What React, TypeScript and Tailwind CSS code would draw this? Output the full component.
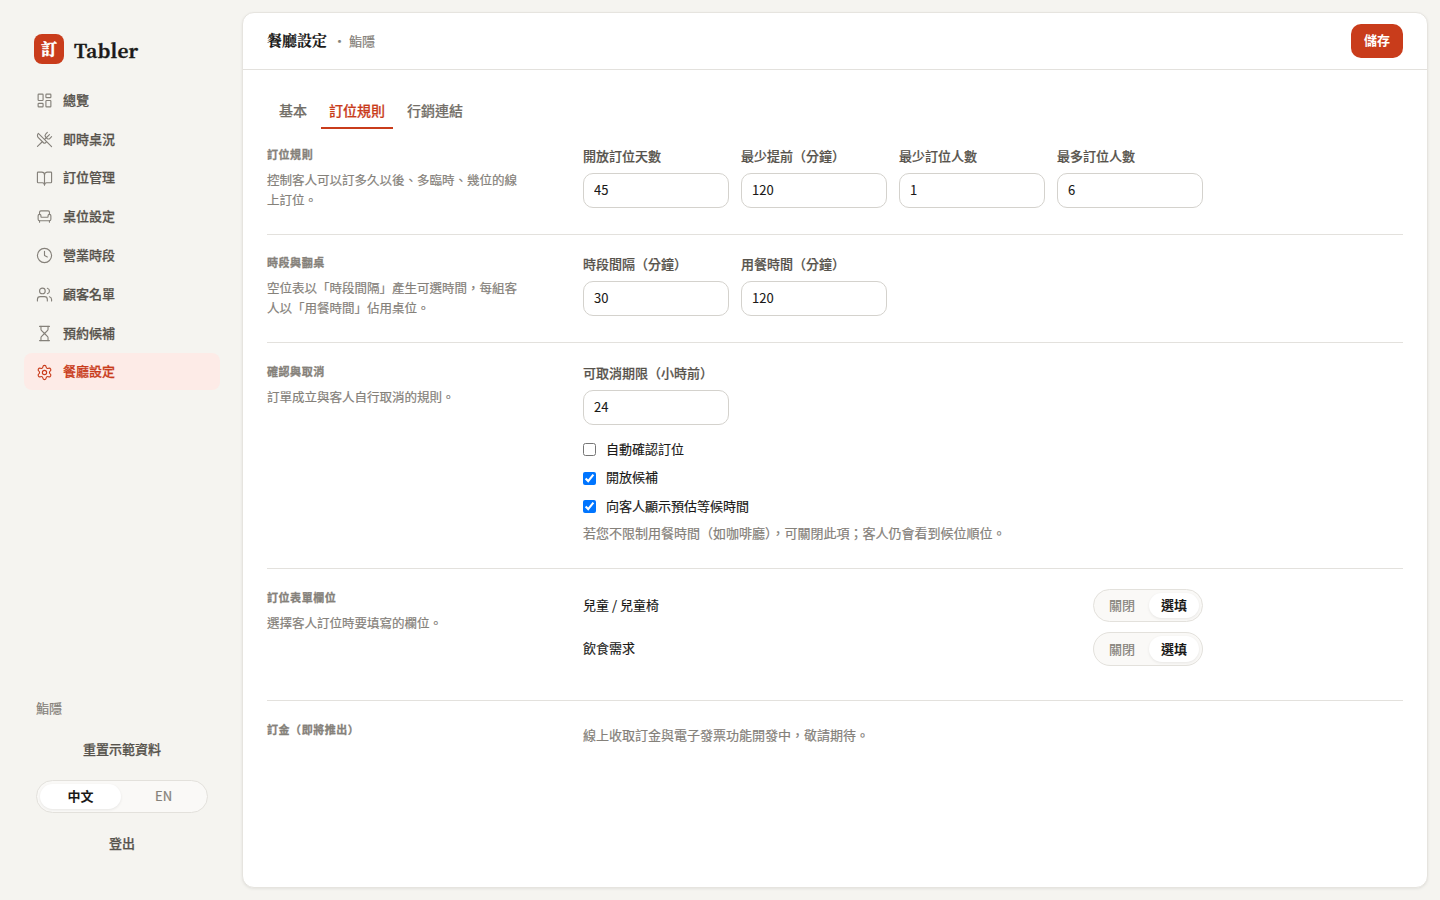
import { useState } from 'react';
import type { ReactNode } from 'react';
import {
  Armchair,
  BookOpen,
  Clock4,
  Hourglass,
  LayoutDashboard,
  Settings,
  Users,
  UtensilsCrossed,
} from 'lucide-react';
import clsx from 'clsx';

const NAV = [
  { label: '總覽', icon: LayoutDashboard },
  { label: '即時桌況', icon: UtensilsCrossed },
  { label: '訂位管理', icon: BookOpen },
  { label: '桌位設定', icon: Armchair },
  { label: '營業時段', icon: Clock4 },
  { label: '顧客名單', icon: Users },
  { label: '預約候補', icon: Hourglass },
  { label: '餐廳設定', icon: Settings },
];

const TABS = ['基本', '訂位規則', '行銷連結'];

function Segmented({ options, initial, wide }: { options: string[]; initial: string; wide?: boolean }) {
  const [value, setValue] = useState(initial);
  return (
    <div
      className={clsx(
        'flex h-[33.4px] gap-0.5 rounded-full border border-[#e3e1dc] bg-[#faf9f7] p-[3px]',
        wide ? 'w-[172px]' : 'w-[110px]'
      )}
    >
      {options.map((o) => (
        <button
          key={o}
          onClick={() => setValue(o)}
          className={clsx(
            'flex-1 rounded-full pb-0.5 text-[13px] leading-none',
            value === o
              ? 'bg-white font-semibold text-[#1a1917] shadow-[0_1px_3px_rgba(0,0,0,0.08)]'
              : 'text-[#85817a] [-webkit-text-stroke:0.2px]'
          )}
        >
          {o}
        </button>
      ))}
    </div>
  );
}

function Section({
  title,
  desc,
  className = 'pt-5 pb-[26px]',
  children,
}: {
  title: string;
  desc?: string;
  className?: string;
  children: ReactNode;
}) {
  return (
    <section className={clsx('grid grid-cols-[260px_620px] gap-x-14 border-[#e3e1dd] not-first:border-t', className)}>
      <div className="-mt-px -mb-1">
        <h2 className="text-[11px] leading-[19px] font-bold tracking-[0.55px] text-[#85817a] [-webkit-text-stroke:0.3px]">
          {title}
        </h2>
        {desc && (
          <p className="mt-1.5 text-[12.5px] leading-5 text-[#85817a] [-webkit-text-stroke:0.2px]">{desc}</p>
        )}
      </div>
      <div>{children}</div>
    </section>
  );
}

function Field({ label, value }: { label: string; value: string }) {
  return (
    <label className="block">
      <span className="block h-[27px] text-[13px] leading-[19px] font-medium whitespace-nowrap text-[#57534c] [-webkit-text-stroke:0.2px]">
        {label}
      </span>
      <input
        defaultValue={value}
        className="block h-[35px] w-full rounded-[10px] border border-[#d4d2cd] bg-white px-2.5 pb-0.5 text-[13px] text-[#1a1917] outline-none [-webkit-text-stroke:0.1px]"
      />
    </label>
  );
}

function Check({ label, checked }: { label: string; checked?: boolean }) {
  return (
    <label className="flex h-[21px] items-center gap-2.5 text-[13px] text-[#1a1917] [-webkit-text-stroke:0.15px]">
      <input type="checkbox" defaultChecked={checked} className="size-[13px]" />
      <span className="pb-0.5">{label}</span>
    </label>
  );
}

export default function App() {
  const [active, setActive] = useState('餐廳設定');
  const [tab, setTab] = useState('訂位規則');

  return (
    <div
      lang="zh-Hant"
      className="flex h-screen overflow-hidden bg-[#f5f4f0] font-['Noto_Sans_CJK_TC','Noto_Sans',sans-serif] text-[13px] text-[#1a1917]"
    >
      <aside className="flex w-[242px] shrink-0 flex-col pt-[34px] pr-[22px] pb-[47px] pl-6">
        <div className="flex h-[30px] items-center gap-2.5 pl-2.5 font-['Noto_Serif_CJK_TC','Noto_Serif_TC','DejaVu_Serif',serif] font-bold">
          <span className="flex size-[30px] items-center justify-center rounded-lg bg-[#c93c1b] pb-px text-[16px] leading-none text-white [-webkit-text-stroke:0.5px]">
            訂
          </span>
          <span className="text-[19px] leading-none tracking-[0.2px] [-webkit-text-stroke:0.4px]">Tabler</span>
        </div>

        <nav className="mt-[17.6px] flex flex-col gap-0.5">
          {NAV.map(({ label, icon: Icon }) => (
            <button
              key={label}
              onClick={() => setActive(label)}
              className={clsx(
                'flex h-[36.8px] items-center gap-2.5 rounded-lg px-3 text-[13px] font-medium',
                active === label ? 'bg-[#fdebe7] text-[#c93c1b]' : 'text-[#57534c]'
              )}
            >
              <Icon size={17} strokeWidth={1.6} className={clsx('mt-px', active !== label && 'text-[#85817a]')} />
              <span className="pb-px [-webkit-text-stroke:0.25px]">{label}</span>
            </button>
          ))}
        </nav>

        <div className="mt-auto flex flex-col px-3">
          <p className="text-[13px] leading-[21px] text-[#85817a] [-webkit-text-stroke:0.2px]">鮨隱</p>
          <button className="mt-5 text-[13px] leading-[21px] font-medium text-[#57534c] [-webkit-text-stroke:0.25px]">
            重置示範資料
          </button>
          <div className="mt-[21px]">
            <Segmented options={['中文', 'EN']} initial="中文" wide />
          </div>
          <button className="mt-[18.6px] text-[13px] leading-[21px] font-medium text-[#57534c] [-webkit-text-stroke:0.25px]">
            登出
          </button>
        </div>
      </aside>

      <main className="mt-3 mr-3 mb-3 flex-1 rounded-xl border border-[#e6e4df] bg-white shadow-[0_1px_3px_rgba(0,0,0,0.08)]">
        <header className="flex h-[57px] items-center justify-between border-b border-[#e3e1dd] px-6">
          <div className="flex items-center pb-0.5">
            <h1 className="font-['Noto_Serif_CJK_TC','Noto_Serif_TC','Noto_Sans_CJK_TC',serif] text-[15px] font-bold [-webkit-text-stroke:0.15px]">
              餐廳設定
            </h1>
            <span className="ml-1.5 pt-px text-[13px] text-[#85817a] [-webkit-text-stroke:0.2px]">・ 鮨隱</span>
          </div>
          <button className="h-[34px] w-[52px] rounded-[10px] bg-[#c93c1b] pb-0.5 text-[13px] font-semibold text-white">
            儲存
          </button>
        </header>

        <div className="px-6">
          <div className="flex gap-1.5 px-1 pt-[23px]">
            {TABS.map((t) => (
              <button
                key={t}
                onClick={() => setTab(t)}
                className={clsx(
                  'h-9 border-b-2 px-2 text-[14px] font-medium [-webkit-text-stroke:0.2px]',
                  tab === t ? 'border-[#c93c1b] text-[#c93c1b]' : 'border-transparent text-[#736f68]'
                )}
              >
                {t}
              </button>
            ))}
          </div>

          <div className="mt-[17px]">
            <Section
              title="訂位規則"
              desc="控制客人可以訂多久以後、多臨時、幾位的線上訂位。"
              className="pb-[26px]"
            >
              <div className="grid grid-cols-4 gap-3">
                <Field label="開放訂位天數" value="45" />
                <Field label="最少提前（分鐘）" value="120" />
                <Field label="最少訂位人數" value="1" />
                <Field label="最多訂位人數" value="6" />
              </div>
            </Section>

            <Section
              title="時段與翻桌"
              desc="空位表以「時段間隔」產生可選時間，每組客人以「用餐時間」佔用桌位。"
              className="pt-[19px] pb-[26px]"
            >
              <div className="grid grid-cols-4 gap-3">
                <Field label="時段間隔（分鐘）" value="30" />
                <Field label="用餐時間（分鐘）" value="120" />
              </div>
            </Section>

            <Section title="確認與取消" desc="訂單成立與客人自行取消的規則。" className="pt-5 pb-[25px]">
              <div className="grid grid-cols-4 gap-3">
                <Field label="可取消期限（小時前）" value="24" />
              </div>
              <div className="mt-3.5 flex flex-col gap-[7.5px]">
                <Check label="自動確認訂位" />
                <Check label="開放候補" checked />
                <Check label="向客人顯示預估等候時間" checked />
              </div>
              <p className="mt-[5px] text-[13px] leading-[21px] text-[#85817a] [-webkit-text-stroke:0.2px]">
                若您不限制用餐時間（如咖啡廳），可關閉此項；客人仍會看到候位順位。
              </p>
            </Section>

            <Section title="訂位表單欄位" desc="選擇客人訂位時要填寫的欄位。">
              <div className="mb-2 flex flex-col gap-2.5">
                {['兒童 / 兒童椅', '飲食需求'].map((f) => (
                  <div key={f} className="flex items-center justify-between">
                    <span className="pb-0.5 [-webkit-text-stroke:0.15px]">{f}</span>
                    <Segmented options={['關閉', '選填']} initial="選填" />
                  </div>
                ))}
              </div>
            </Section>

            <Section title="訂金（即將推出）">
              <p className="mt-[3px] text-[13px] leading-[21px] text-[#85817a] [-webkit-text-stroke:0.2px]">
                線上收取訂金與電子發票功能開發中，敬請期待。
              </p>
            </Section>
          </div>
        </div>
      </main>
    </div>
  );
}
